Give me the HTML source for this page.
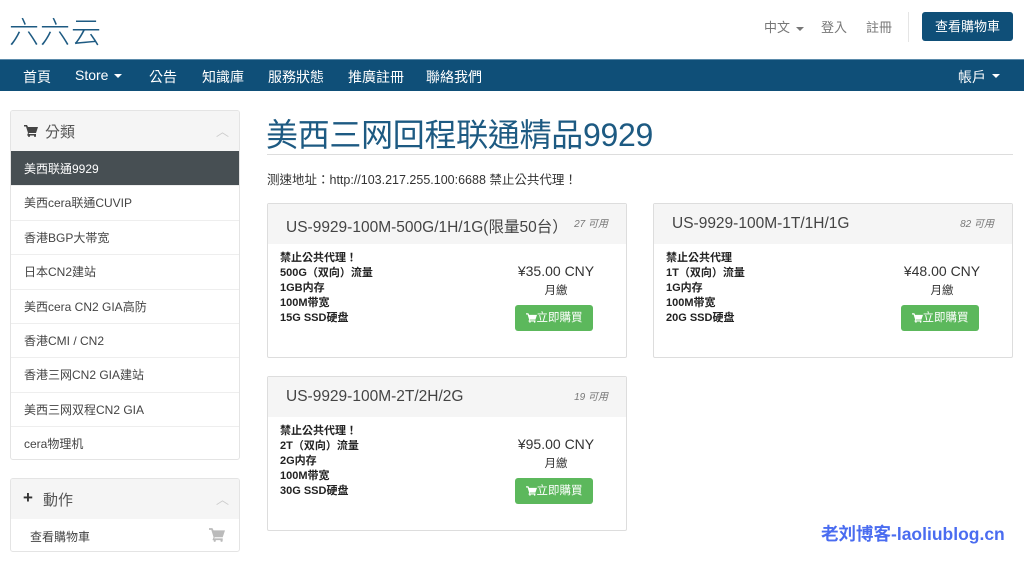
<!DOCTYPE html>
<html><head><meta charset="utf-8"><style>
*{margin:0;padding:0;box-sizing:border-box}
body{width:1024px;height:562px;overflow:hidden;background:#fff;font-family:"Liberation Sans","Noto Sans CJK TC",sans-serif;color:#333;position:relative}
.a{position:absolute;white-space:nowrap}
.nav{position:absolute;left:0;top:59px;width:1024px;height:32px;background:#0f4f78;border-top:1px solid #5b8bab}
.nav span{position:absolute;top:7px;color:#fff;font-size:14px}
.caret{display:inline-block;width:0;height:0;border-left:4px solid transparent;border-right:4px solid transparent;border-top:4px solid currentColor;vertical-align:middle;margin-left:6px}
.panel{position:absolute;left:10px;width:230px;border:1px solid #e4e4e4;border-radius:3px;overflow:hidden;background:#fff}
.ph{height:40px;background:#f5f5f5;position:relative;font-size:15px;color:#555}
.item{height:34.4px;border-top:1px solid #eee;font-size:12px;padding:8px 0 0 13px;color:#444}
.card{position:absolute;width:360px;height:155px;border:1px solid #ddd;border-radius:2px}
.ch{height:40px;background:#f5f5f5;position:relative}
.ch .t{position:absolute;left:18px;top:11px;font-size:15.5px;color:#444}
.ch .q{position:absolute;right:18px;top:11px;font-size:10px;font-style:italic;color:#777}
.desc{position:absolute;left:12px;top:47px;font-size:11px;line-height:15px;color:#222;font-weight:bold;-webkit-text-stroke:0}
.price{position:absolute;left:238px;top:59px;width:100px;text-align:center;font-size:14px;color:#333}
.mo{position:absolute;left:238px;top:78px;width:100px;text-align:center;font-size:11.5px}
.btn{position:absolute;left:247px;top:101px;width:78px;height:26px;background:#5cb85c;border-radius:3px;color:#fff;font-size:11.5px;text-align:center;line-height:26px}
svg{vertical-align:middle}
</style></head><body>
<div class="a" style="left:9px;top:8px;font-size:30px;letter-spacing:1px;color:#1d5a82;font-family:'Noto Sans CJK SC',sans-serif;font-weight:300">六六云</div>
<div class="a" style="left:764px;top:17px;font-size:13px;color:#777">中文<span class="caret"></span></div>
<div class="a" style="left:821px;top:17px;font-size:13px;color:#777">登入</div>
<div class="a" style="left:866px;top:17px;font-size:13px;color:#777">註冊</div>
<div class="a" style="left:908px;top:12px;width:1px;height:30px;background:#e5e5e5"></div>
<div class="a" style="left:922px;top:12px;width:91px;height:29px;background:#0f4f78;border-radius:3px;color:#fff;font-size:13px;text-align:center;line-height:29px">查看購物車</div>
<div class="nav">
<span style="left:23px">首頁</span><span style="left:75px">Store<span class="caret"></span></span><span style="left:149px">公告</span><span style="left:202px">知識庫</span><span style="left:268px">服務狀態</span><span style="left:348px">推廣註冊</span><span style="left:426px">聯絡我們</span><span style="left:958px">帳戶<span class="caret"></span></span>
</div>
<div class="panel" style="top:110px;height:350px">
<div class="ph"><svg class="a" style="left:13px;top:14px" width="14" height="12" viewBox="0 0 14 12"><path d="M0 0h3l1 2h10l-2 6H5l-.5 1H12v1.5H3L4 8 2 1.5H0z" fill="#444"/><circle cx="5" cy="11" r="1" fill="#444"/><circle cx="11" cy="11" r="1" fill="#444"/></svg><span class="a" style="left:34px;top:10px">分類</span><span class="a" style="left:205px;top:10px;color:#ccc;font-size:13px">︿</span></div>
<div class="item" style="background:#474f53;color:#fff;border-top:0;padding-top:9px">美西联通9929</div>
<div class="item">美西cera联通CUVIP</div>
<div class="item">香港BGP大帯宽</div>
<div class="item">日本CN2建站</div>
<div class="item">美西cera CN2 GIA高防</div>
<div class="item">香港CMI / CN2</div>
<div class="item">香港三网CN2 GIA建站</div>
<div class="item">美西三网双程CN2 GIA</div>
<div class="item">cera物理机</div>
</div>
<div class="panel" style="top:478px;height:74px">
<div class="ph"><span class="a" style="left:12px;top:9px;font-size:17px;font-weight:bold;color:#333">+</span><span class="a" style="left:32px;top:10px">動作</span><span class="a" style="left:205px;top:10px;color:#ccc;font-size:13px">︿</span></div>
<div class="item" style="border-top:0;padding-left:19px;padding-top:9px">查看購物車<svg style="float:right;margin-right:14px" width="16" height="14" viewBox="0 0 14 12"><path d="M0 0h3l1 2h10l-2 6H5l-.5 1H12v1.5H3L4 8 2 1.5H0z" fill="#bbb"/><circle cx="5" cy="11" r="1" fill="#bbb"/><circle cx="11" cy="11" r="1" fill="#bbb"/></svg></div>
</div>
<div class="a" style="left:266px;top:110px;font-size:32px;color:#1d5a82;letter-spacing:-0.3px">美西三网回程联通精品9929</div>
<div class="a" style="left:267px;top:154px;width:746px;height:1px;background:#ddd"></div>
<div class="a" style="left:267px;top:169px;font-size:12.5px;color:#333">测速地址：http://103.217.255.100:6688 禁止公共代理！</div>
<div class="card" style="left:267px;top:203px"><div class="ch"><span class="t">US-9929-100M-500G/1H/1G(限量50台）</span><span class="q">27 可用</span></div>
<div class="desc">禁止公共代理！<br>500G（双向）流量<br>1GB内存<br>100M带宽<br>15G SSD硬盘</div>
<div class="price">¥35.00 CNY</div><div class="mo">月繳</div><div class="btn"><svg width="11" height="10" viewBox="0 0 14 12"><path d="M0 0h3l1 2h10l-2 6H5l-.5 1H12v1.5H3L4 8 2 1.5H0z" fill="#fff"/><circle cx="5" cy="11" r="1" fill="#fff"/><circle cx="11" cy="11" r="1" fill="#fff"/></svg>立即購買</div></div>
<div class="card" style="left:653px;top:203px"><div class="ch"><span class="t">US-9929-100M-1T/1H/1G</span><span class="q">82 可用</span></div>
<div class="desc">禁止公共代理<br>1T（双向）流量<br>1G内存<br>100M带宽<br>20G SSD硬盘</div>
<div class="price">¥48.00 CNY</div><div class="mo">月繳</div><div class="btn"><svg width="11" height="10" viewBox="0 0 14 12"><path d="M0 0h3l1 2h10l-2 6H5l-.5 1H12v1.5H3L4 8 2 1.5H0z" fill="#fff"/><circle cx="5" cy="11" r="1" fill="#fff"/><circle cx="11" cy="11" r="1" fill="#fff"/></svg>立即購買</div></div>
<div class="card" style="left:267px;top:376px"><div class="ch"><span class="t">US-9929-100M-2T/2H/2G</span><span class="q">19 可用</span></div>
<div class="desc">禁止公共代理！<br>2T（双向）流量<br>2G内存<br>100M带宽<br>30G SSD硬盘</div>
<div class="price">¥95.00 CNY</div><div class="mo">月繳</div><div class="btn"><svg width="11" height="10" viewBox="0 0 14 12"><path d="M0 0h3l1 2h10l-2 6H5l-.5 1H12v1.5H3L4 8 2 1.5H0z" fill="#fff"/><circle cx="5" cy="11" r="1" fill="#fff"/><circle cx="11" cy="11" r="1" fill="#fff"/></svg>立即購買</div></div>
<div class="a" style="left:821px;top:521px;font-size:17.5px;font-weight:bold;color:#4a6cf0">老刘博客-laoliublog.cn</div>
</body></html>
